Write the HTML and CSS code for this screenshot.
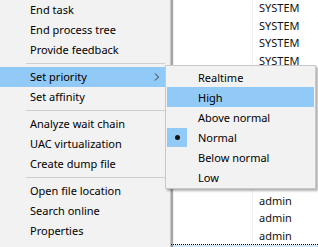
FILE: index.html
```html
<!DOCTYPE html>
<html>
<head>
<meta charset="utf-8">
<link rel="stylesheet" href="styles.css">
</head>
<body>
<div class="table">
  <div class="row"><span class="name"></span><span class="user">SYSTEM</span></div>
  <div class="row"><span class="name"></span><span class="user">SYSTEM</span></div>
  <div class="row"><span class="name"></span><span class="user">SYSTEM</span></div>
  <div class="row"><span class="name"></span><span class="user">SYSTEM</span></div>
  <div class="row"><span class="name"></span><span class="user"></span></div>
  <div class="row"><span class="name"></span><span class="user"></span></div>
  <div class="row"><span class="name"></span><span class="user"></span></div>
  <div class="row"><span class="name"></span><span class="user"></span></div>
  <div class="row"><span class="name"></span><span class="user"></span></div>
  <div class="row"><span class="name"></span><span class="user"></span></div>
  <div class="row"><span class="name"></span><span class="user"></span></div>
  <div class="row"><span class="name"></span><span class="user">admin</span></div>
  <div class="row"><span class="name"></span><span class="user">admin</span></div>
  <div class="row"><span class="name"></span><span class="user">admin</span></div>
  <div class="row selected"><span class="name"></span><span class="user"></span></div>
</div>

<div class="menu main-menu">
  <div class="item">End task</div>
  <div class="item">End process tree</div>
  <div class="item">Provide feedback</div>
  <div class="sep"></div>
  <div class="item active">Set priority
    <svg class="chev" width="6" height="8" viewBox="0 0 6 8"><polyline points="1,0.5 4.5,4 1,7.5" fill="none" stroke="#333" stroke-width="1"/></svg>
  </div>
  <div class="item">Set affinity</div>
  <div class="sep"></div>
  <div class="item">Analyze wait chain</div>
  <div class="item">UAC virtualization</div>
  <div class="item">Create dump file</div>
  <div class="sep"></div>
  <div class="item">Open file location</div>
  <div class="item">Search online</div>
  <div class="item">Properties</div>
  <div class="item dim">Go to details</div>
</div>

<div class="menu sub-menu">
  <div class="sitem"><span class="check"></span><span>Realtime</span></div>
  <div class="sitem active"><span class="check"></span><span>High</span></div>
  <div class="sitem"><span class="check"></span><span>Above normal</span></div>
  <div class="sitem"><span class="check on"><span class="dot"></span></span><span>Normal</span></div>
  <div class="sitem"><span class="check"></span><span>Below normal</span></div>
  <div class="sitem"><span class="check"></span><span>Low</span></div>
</div>
</body>
</html>
```

FILE: styles.css
```css
html, body {
  margin: 0;
  padding: 0;
  background: #ffffff;
  overflow: hidden;
  width: 318px;
  height: 247px;
  font-family: "Noto Sans", Lato, sans-serif;
  font-size: 11px;
  color: #000;
}

.table {
  margin-top: -1px;
}

.row {
  display: grid;
  grid-template-columns: 253px 1fr;
  height: 17.5px;
  line-height: 17.5px;
}

.name {
  border-right: 1px solid #f0f0f0;
}

.user {
  padding-left: 6px;
  color: #111;
}

.row.selected {
  background: #cce8ff;
  background-clip: padding-box;
  border-top: 1px dotted #000;
}

.menu {
  position: absolute;
  background: #f2f2f2;
  box-sizing: border-box;
}

.main-menu {
  left: 0;
  top: 0;
  width: 171px;
  height: 270px;
  border-right: 1px solid #c8c8c8;
  box-shadow: 2px 0 1px rgba(0, 0, 0, 0.35);
  padding-right: 5px;
}

.item {
  position: relative;
  height: 20px;
  line-height: 20px;
  padding-left: 30px;
  white-space: nowrap;
}

.item.active {
  background: #91c9f7;
}

.item.dim {
  color: #9a9a9a;
}

.chev {
  position: absolute;
  left: 154px;
  top: 6px;
}

.sep {
  height: 1px;
  background: #cfcfcf;
  margin: 3px 0 3px 26px;
}

.sub-menu {
  left: 165px;
  top: 65px;
  width: 151px;
  border: 1px solid #c8c8c8;
  padding: 1px;
  box-shadow: 2px 2px 2px rgba(0, 0, 0, 0.3);
}

.sitem {
  display: flex;
  align-items: center;
  height: 20px;
  white-space: nowrap;
}

.sitem.active {
  background: #91c9f7;
}

.check {
  flex: none;
  width: 20px;
  height: 19px;
  margin-right: 11px;
  display: grid;
  place-items: center;
}

.check.on {
  background: #91c9f7;
}

.dot {
  width: 5px;
  height: 5px;
  border-radius: 50%;
  background: #111;
}
```
